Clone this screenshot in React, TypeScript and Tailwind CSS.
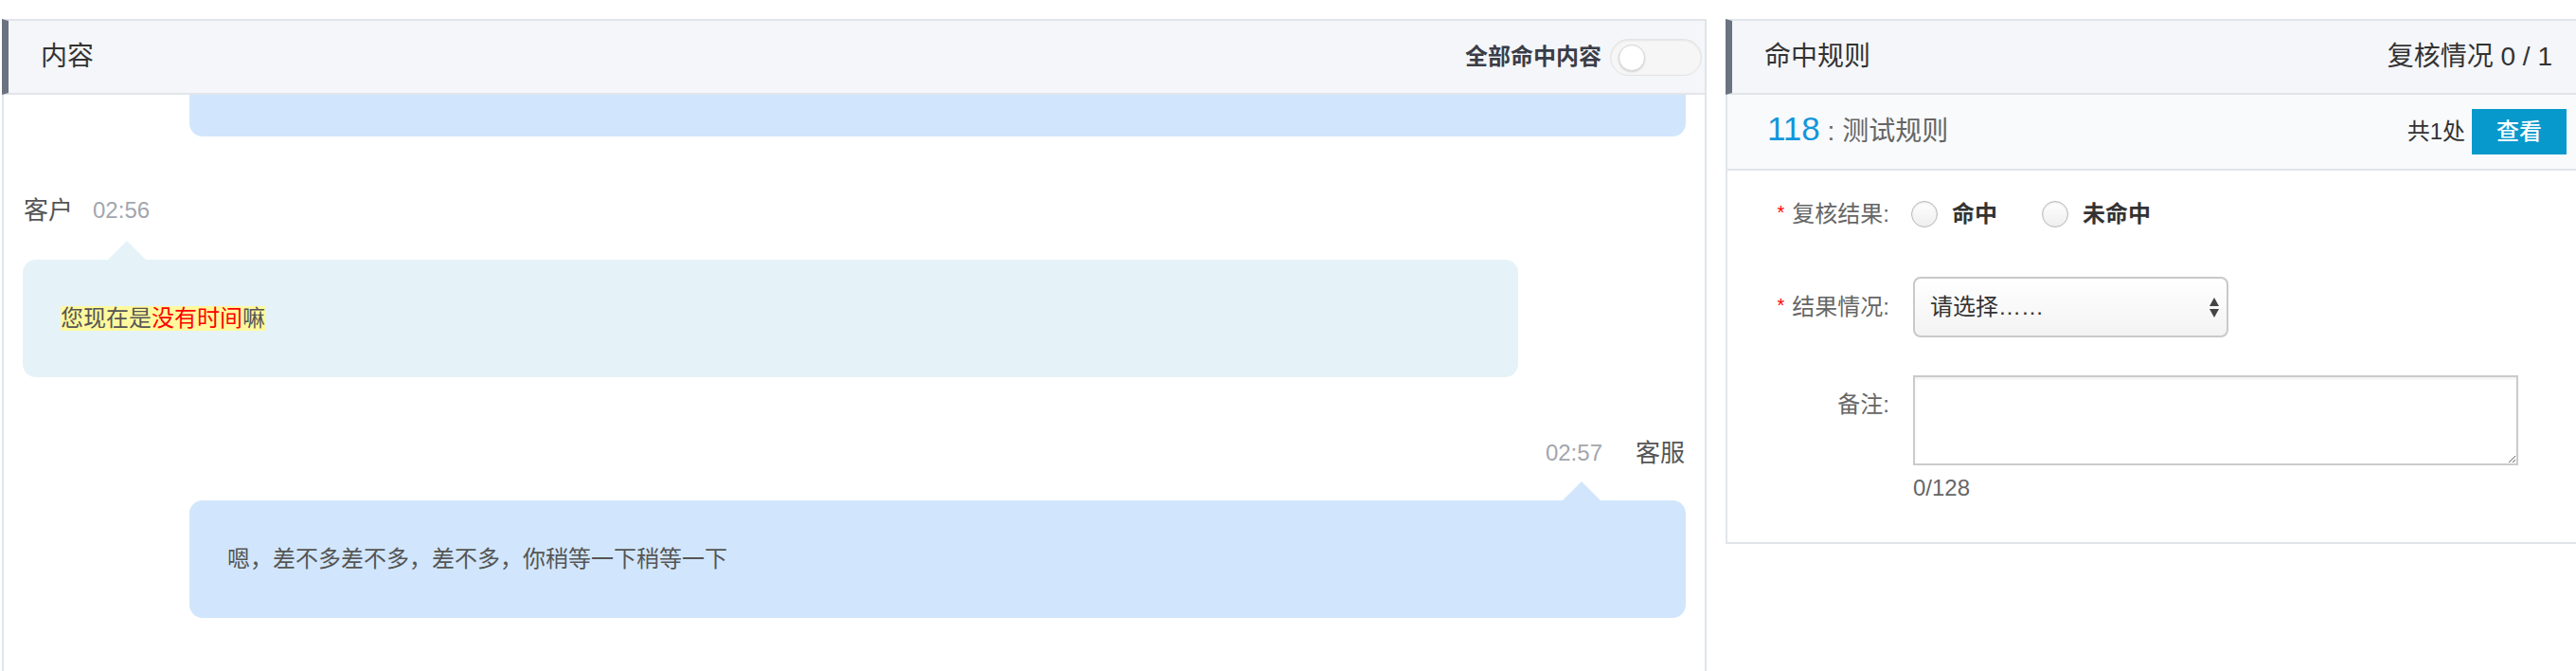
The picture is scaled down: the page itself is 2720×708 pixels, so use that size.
import React from "react";

const ff = "font-['Liberation_Sans','Noto_Sans_CJK_SC',sans-serif]";

function Toggle() {
  return (
    <div className="relative w-[97px] h-[39px] rounded-full border border-[#e3e3e3] bg-[#f6f6f6] shadow-[inset_0_1px_2px_rgba(0,0,0,0.08)]">
      <div className="absolute left-[8px] top-[5px] w-[28px] h-[28px] rounded-full bg-white border border-[#d6d6d6] shadow-[0_1px_2px_rgba(0,0,0,0.15)]" />
    </div>
  );
}

function Radio({ label }: { label: string }) {
  return (
    <label className="flex items-center">
      <span className="w-[28px] h-[28px] rounded-full border border-[#b8b8b8] bg-linear-to-b from-white to-[#eeeeee] shadow-[inset_0_1px_2px_rgba(0,0,0,0.1)]" />
      <span className="ml-[15px] text-[24px] leading-[28px] font-bold text-[#333]">{label}</span>
    </label>
  );
}

function Label({ text, required }: { text: string; required?: boolean }) {
  return (
    <div className="w-[171px] shrink-0 flex justify-end items-start text-[24px] leading-[28px] text-[#666]">
      {required && <span className="text-[#f00] text-[20px] leading-[20px] mr-[8px] mt-[2px]">*</span>}
      <span>{text}</span>
    </div>
  );
}

export default function App() {
  return (
    <div className={`${ff} w-[2720px] h-[708px] overflow-hidden bg-white flex items-start pt-[20px] pl-[2px] gap-[20px]`}>
      {/* 内容 */}
      <div className="w-[1800px] shrink-0 flex flex-col h-[720px]">
        <div className="h-[80px] flex items-center justify-between bg-[#f4f6f9] border-t-2 border-b-2 border-r-2 border-[#e1e5ea] border-l-[7px] border-l-[#6b7380] pl-[34px] pr-[3px]">
          <span className="text-[28px] leading-[30px] text-[#333]">内容</span>
          <div className="flex items-center gap-[9px]">
            <span className="text-[24px] leading-[28px] font-bold text-[#3a3d48]">全部命中内容</span>
            <Toggle />
          </div>
        </div>
        <div className="flex-1 flex flex-col border-x-2 border-[#e1e5ea]">
          <div className="ml-[196px] mr-[20px] h-[44px] rounded-b-[14px] bg-[#d1e6fc]" />

          <div className="mt-[63px] ml-[21px] flex items-center h-[30px]">
            <span className="text-[26px] leading-[30px] text-[#555]">客户</span>
            <span className="ml-[21px] text-[24px] leading-[30px] text-[#a3a6ad]">02:56</span>
          </div>
          <div className="mt-[17px] ml-[110px] w-0 h-0 border-x-[20px] border-x-transparent border-b-[20px] border-b-[#e5f3f8]" />
          <div className="ml-[20px] w-[1579px] h-[124px] rounded-[14px] bg-[#e5f3f8] flex items-center pl-[40px]">
            <span className="text-[24px] leading-[26px] bg-[#fff99d] text-[#555]">
              您现在是<span className="text-[#f00]">没有时间</span>嘛
            </span>
          </div>

          <div className="mt-[65px] mr-[21px] flex items-center justify-end h-[30px]">
            <span className="text-[24px] leading-[30px] text-[#a3a6ad]">02:57</span>
            <span className="ml-[35px] text-[26px] leading-[30px] text-[#555]">客服</span>
          </div>
          <div className="mt-[15px] mr-[110px] self-end w-0 h-0 border-x-[20px] border-x-transparent border-b-[20px] border-b-[#d1e6fc]" />
          <div className="ml-[196px] mr-[20px] h-[124px] rounded-[14px] bg-[#d1e6fc] flex items-center pl-[40px]">
            <span className="text-[24px] leading-[26px] text-[#555]">嗯，差不多差不多，差不多，你稍等一下稍等一下</span>
          </div>
        </div>
      </div>

      {/* 命中规则 */}
      <div className="w-[898px] shrink-0 flex flex-col">
        <div className="h-[80px] flex items-center justify-between bg-[#f4f6f9] border-t-2 border-b-2 border-[#e1e5ea] border-l-[7px] border-l-[#6b7380] pl-[34px] pr-[25px]">
          <span className="text-[28px] leading-[30px] text-[#333]">命中规则</span>
          <span className="text-[28px] leading-[30px] text-[#333]">复核情况 0 / 1</span>
        </div>
        <div className="h-[80px] flex items-center justify-between bg-[#f9fafc] border-l-2 border-b-2 border-[#e1e5ea] pl-[42px] pr-[10px]">
          <div className="leading-[40px] whitespace-pre">
            <span className="text-[35px] text-[#1296db]">118</span>
            <span className="text-[28px] text-[#666]">{" : 测试规则"}</span>
          </div>
          <div className="flex items-center gap-[7px]">
            <span className="text-[24px] leading-[28px] text-[#333]">共1处</span>
            <button className="w-[100px] h-[48px] bg-[#0899cc] text-white text-[24px] leading-[28px] font-medium">查看</button>
          </div>
        </div>
        <div className="border-l-2 border-b-2 border-[#e1e5ea] pt-[32px] pb-[45px] flex flex-col">
          <div className="flex items-center">
            <Label text="复核结果:" required />
            <div className="ml-[23px] flex items-center gap-[47px]">
              <Radio label="命中" />
              <Radio label="未命中" />
            </div>
          </div>

          <div className="mt-[52px] flex items-center">
            <Label text="结果情况:" required />
            <div className="ml-[25px] w-[333px] h-[64px] rounded-[8px] border-2 border-[#c9c9c9] bg-linear-to-b from-white to-[#f3f3f3] flex items-center justify-between pl-[16px] pr-[7px]">
              <span className="text-[24px] leading-[28px] text-[#333]">请选择……</span>
              <svg width="12" height="22" viewBox="0 0 12 22">
                <polygon points="6,1 11,10 1,10" fill="#444" />
                <polygon points="1,13 11,13 6,22" fill="#444" />
              </svg>
            </div>
          </div>

          <div className="mt-[40px] flex items-start">
            <div className="pt-[17px]">
              <Label text="备注:" />
            </div>
            <div className="ml-[25px] flex flex-col">
              <textarea className="w-[639px] h-[95px] border-2 border-[#cbcbcb] shadow-[inset_0_2px_3px_rgba(0,0,0,0.06)] resize-y outline-none" />
              <span className="mt-[12px] text-[24px] leading-[24px] text-[#666]">0/128</span>
            </div>
          </div>
        </div>
      </div>
    </div>
  );
}
